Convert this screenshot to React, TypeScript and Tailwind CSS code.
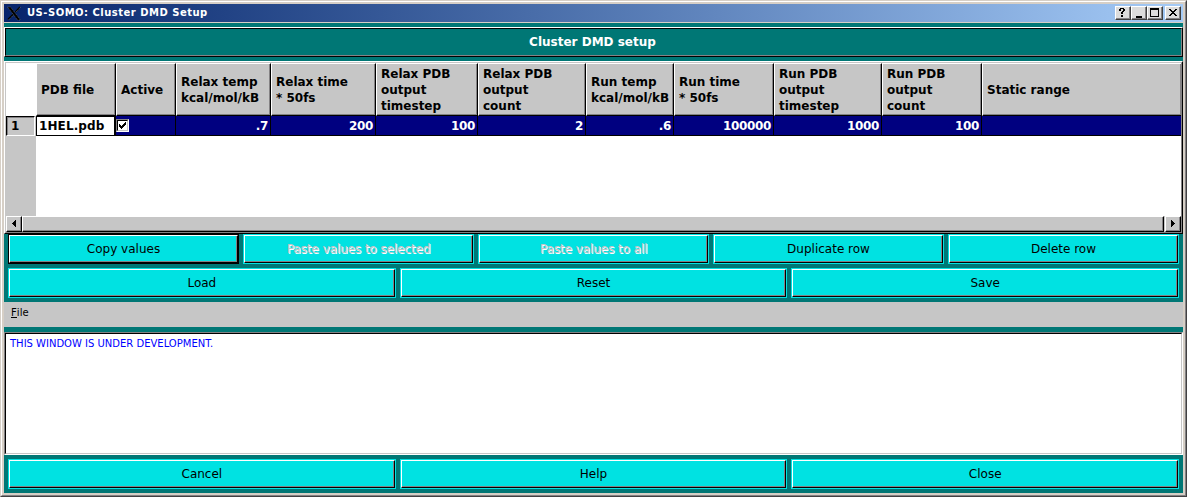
import React from "react";

const columns = [
  { title: ["PDB file"], width: "w-[80px]", value: "" },
  { title: ["Active"], width: "w-[60px]", value: "" },
  { title: ["Relax temp", "kcal/mol/kB"], width: "w-[95px]", value: ".7" },
  { title: ["Relax time", "* 50fs"], width: "w-[105px]", value: "200" },
  { title: ["Relax PDB", "output", "timestep"], width: "w-[102px]", value: "100" },
  { title: ["Relax PDB", "output", "count"], width: "w-[108px]", value: "2" },
  { title: ["Run temp", "kcal/mol/kB"], width: "w-[88px]", value: ".6" },
  { title: ["Run time", "* 50fs"], width: "w-[100px]", value: "100000" },
  { title: ["Run PDB", "output", "timestep"], width: "w-[108px]", value: "1000" },
  { title: ["Run PDB", "output", "count"], width: "w-[100px]", value: "100" },
  { title: ["Static range"], width: "w-[200px]", value: "" },
];

function PushButton({ label, disabled, isDefault }: { label: string; disabled?: boolean; isDefault?: boolean }) {
  return (
    <button
      disabled={disabled}
      className={`h-[30px] min-w-0 flex-1 border ${isDefault ? "border-black" : "border-[#00e2e2]"}`}
    >
      <span className="block h-full border border-t-white border-l-white border-r-black border-b-black">
        <span
          className={`flex h-full items-center justify-center border-r border-b border-[#848284] bg-[#00e2e2] pt-px pl-px text-[12px] leading-[14px] ${
            disabled ? "tracking-[-0.08px] text-[#c6c3c6] [text-shadow:1px_1px_0_#fff]" : "text-black"
          }`}
        >
          {label}
        </span>
      </span>
    </button>
  );
}

function CaptionButton({ label, children }: { label: string; children: React.ReactNode }) {
  return (
    <button
      aria-label={label}
      className="h-[14px] w-4 border border-t-white border-l-white border-r-[#404040] border-b-[#404040] bg-[#dcdcdc]"
    >
      <span className="flex h-full items-center justify-center border-r border-b border-[#848284]">{children}</span>
    </button>
  );
}

function ScrollArrow({ left }: { left?: boolean }) {
  return (
    <button
      aria-label={left ? "Scroll left" : "Scroll right"}
      className="h-4 w-4 border border-t-white border-l-white border-r-black border-b-black bg-[#c6c6c6]"
    >
      <span className="flex h-full items-center justify-center border-r border-b border-[#848284]">
        <svg width="4" height="7" viewBox="0 0 4 7" shapeRendering="crispEdges">
          {left ? <path d="M4 0v7L0 3.5z" /> : <path d="M0 0v7l4-3.5z" />}
        </svg>
      </span>
    </button>
  );
}

export default function App() {
  return (
    <div className="h-[497px] w-[1187px] overflow-hidden border border-t-[#d6cfc6] border-l-[#d6cfc6] border-r-[#424142] border-b-[#424142] font-['DejaVu_Sans',sans-serif] text-black">
      <div className="h-full border border-t-white border-l-white border-r-[#848284] border-b-[#848284]">
        <div className="flex h-full flex-col border-2 border-[#d6cfc6] bg-[#007775]">
          <header className="flex h-[19px] shrink-0 items-center border-b border-[#d6cfc6] bg-linear-to-r from-[#08246b] to-[#a5cbf7] pr-[2px] pl-[3px]">
            <svg width="15" height="15" viewBox="0 0 15 15" className="mt-px shrink-0">
              <path d="M.5 1h3L13.500 14h-3z" fill="#000" stroke="#8a8a7a" strokeWidth=".5" strokeDasharray="1 1" />
              <path d="M13 1 8.500 6M6 8.500l-5 5" stroke="#000" strokeWidth="1.6" />
              <path d="M13.800 1 9 6M6.500 9l-5 5" stroke="#a0a090" strokeWidth=".6" strokeDasharray="1 1" />
            </svg>
            <h1 className="ml-[5px] flex-1 text-[10px] leading-[18px] font-bold tracking-[0.49px] whitespace-pre text-white">
              US-SOMO: Cluster DMD Setup
            </h1>
            <div className="flex">
              <CaptionButton label="Help">
                <svg width="7" height="9" viewBox="0 0 7 9" shapeRendering="crispEdges">
                  <path d="M1 0h4v1H1zM0 1h2v2H0zM4 1h2v2H4zM3 3h2v1H3zM2 4h2v2H2zM2 7h2v2H2z" />
                </svg>
              </CaptionButton>
              <CaptionButton label="Minimize">
                <svg width="10" height="10" viewBox="0 0 10 10" shapeRendering="crispEdges">
                  <path d="M2 8h6v2H2z" />
                </svg>
              </CaptionButton>
              <CaptionButton label="Maximize">
                <svg width="9" height="9" viewBox="0 0 9 9" shapeRendering="crispEdges">
                  <path fillRule="evenodd" d="M0 0h9v9H0zM1 2v6h7V2z" />
                </svg>
              </CaptionButton>
              <span className="w-[2px]" />
              <CaptionButton label="Close">
                <svg width="8" height="7" viewBox="0 0 8 7" shapeRendering="crispEdges">
                  <path d="M0 0h2v1h1v1h2V1h1V0h2v1H7v1H6v1H5v1h1v1h1v1h1v1H6V6H5V5H3v1H2v1H0V6h1V5h1V4h1V3H2V2H1V1H0z" />
                </svg>
              </CaptionButton>
            </div>
          </header>

          <div className="mt-1 h-[30px] shrink-0 border border-t-white border-l-white border-r-black border-b-black">
            <div className="flex h-full items-center justify-center border border-t-black border-l-black border-r-[#848284] border-b-[#848284] pr-[2px] text-[12px] font-bold text-white">
              Cluster DMD setup
            </div>
          </div>

          <section className="mt-1 h-[173px] shrink-0 border border-t-white border-l-white border-r-black border-b-black">
            <div className="flex h-full flex-col overflow-hidden border border-t-[#c6c6c6] border-l-[#c6c6c6] border-r-[#848284] border-b-[#848284] bg-white text-[12px] leading-4 font-bold">
              <div className="flex h-[53px] shrink-0 pl-[30px]">
                {columns.map((c, i) => (
                  <div
                    key={i}
                    className={`${c.width} shrink-0 border border-t-white border-l-white border-r-black border-b-black`}
                  >
                    <div className="flex h-full flex-col justify-center border-r border-b border-[#848284] bg-[#c6c6c6] pt-[2px] pl-1 whitespace-nowrap">
                      {c.title.map((line) => (
                        <div key={line}>{line}</div>
                      ))}
                    </div>
                  </div>
                ))}
              </div>
              <div className="flex h-[20px] shrink-0">
                <div className="w-[30px] shrink-0 bg-[#c6c6c6]">
                  <div className="h-full w-[29px] border border-t-black border-l-black border-r-white border-b-white">
                    <div className="h-full border-t border-l border-[#848284] pl-[3px] leading-4">1</div>
                  </div>
                </div>
                {columns.map((c, i) =>
                  i === 0 ? (
                    <div
                      key={i}
                      className="w-[80px] shrink-0 border border-r-2 border-black bg-white pl-[2px] leading-[18px] tracking-[0.1px]"
                    >
                      1HEL.pdb
                    </div>
                  ) : (
                    <div
                      key={i}
                      className={`${c.width} shrink-0 border-r border-b border-black bg-[#000080] pr-[2px] text-right leading-[20px] tracking-[-0.35px] text-white`}
                    >
                      {i === 1 ? (
                        <div className="mt-[3px] h-[13px] w-[13px] border border-t-[#848284] border-l-[#848284] border-r-white border-b-white">
                          <div className="flex h-full items-center justify-center border border-t-black border-l-black border-r-[#c6c6c6] border-b-[#c6c6c6] bg-white">
                            <svg width="7" height="7" viewBox="0 0 7 7" shapeRendering="crispEdges">
                              <path d="M0 2h1v1h1v1h1V3h1V2h1V1h1V0h1v3H6v1H5v1H4v1H3v1H2V6H1V5H0z" />
                            </svg>
                          </div>
                        </div>
                      ) : (
                        c.value
                      )}
                    </div>
                  ),
                )}
              </div>
              <div className="flex-1">
                <div className="h-full w-[30px] bg-[#c6c6c6]" />
              </div>
              <div className="flex h-4 shrink-0 bg-[#c6c6c6]">
                <ScrollArrow left />
                <div className="h-4 flex-1 border border-t-white border-l-white border-r-black border-b-black">
                  <div className="h-full border-r border-b border-[#848284]" />
                </div>
                <span className="w-px" />
                <ScrollArrow />
              </div>
            </div>
          </section>

          <div className="flex shrink-0 gap-1 px-1">
            <PushButton label="Copy values" isDefault />
            <PushButton label="Paste values to selected" disabled />
            <PushButton label="Paste values to all" disabled />
            <PushButton label="Duplicate row" />
            <PushButton label="Delete row" />
          </div>
          <div className="mt-1 flex shrink-0 gap-1 px-1">
            <PushButton label="Load" />
            <PushButton label="Reset" />
            <PushButton label="Save" />
          </div>

          <nav className="mt-1 h-[25px] shrink-0 bg-[#c6c6c6] pt-[3px] pl-[7px] text-[10px] leading-[15px] tracking-[0.1px]">
            <span className="inline-block h-[13px] border-b border-black">F</span>ile
          </nav>

          <div className="mt-[5px] h-[123px] shrink-0 border border-t-[#848284] border-l-[#848284] border-r-white border-b-white">
            <div className="h-full border border-t-black border-l-black border-r-[#c6c6c6] border-b-[#c6c6c6] bg-white pt-[3px] pl-1 text-[10px] leading-[14px] text-[#0000ff]">
              THIS WINDOW IS UNDER DEVELOPMENT.
            </div>
          </div>

          <div className="mt-1 flex shrink-0 gap-1 px-1">
            <PushButton label="Cancel" />
            <PushButton label="Help" />
            <PushButton label="Close" />
          </div>
        </div>
      </div>
    </div>
  );
}
